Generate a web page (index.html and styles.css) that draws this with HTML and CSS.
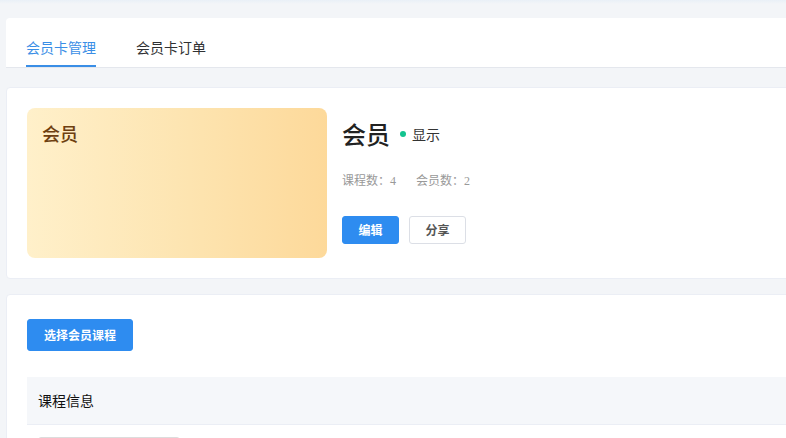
FILE: index.html
```html
<!DOCTYPE html>
<html lang="zh">
<head>
<meta charset="utf-8">
<title>会员卡管理</title>
<link rel="stylesheet" href="styles.css">
</head>
<body>
<div class="topline"></div>
<main class="page">
  <section class="tabs-panel">
    <nav class="tabs">
      <div class="tab active">会员卡管理</div>
      <div class="tab">会员卡订单</div>
    </nav>
  </section>

  <section class="panel card-panel">
    <div class="member-card">
      <div class="member-card-name">会员</div>
    </div>
    <div class="info">
      <div class="title-row">
        <h1 class="title">会员</h1>
        <span class="status"><span class="dot"></span>显示</span>
      </div>
      <div class="stats">
        <span class="stat">课程数：4</span>
        <span class="stat">会员数：2</span>
      </div>
      <div class="actions">
        <button class="btn btn-primary">编辑</button>
        <button class="btn btn-default">分享</button>
      </div>
    </div>
  </section>

  <section class="panel course-panel">
    <button class="btn btn-primary btn-large">选择会员课程</button>
    <div class="table">
      <div class="thead">课程信息</div>
      <div class="trow">
        <div class="thumb"></div>
      </div>
    </div>
  </section>
</main>
</body>
</html>
```
FILE: styles.css
```css
html, body {
  margin: 0;
  padding: 0;
}
body {
  background: #f3f5f8;
  font-family: "Liberation Serif", "Noto Sans CJK SC", serif;
  overflow: hidden;
  width: 786px;
  height: 438px;
  position: relative;
}
.topline {
  height: 4px;
  background: linear-gradient(#e9f0f7, #f3f5f8);
}
.page {
  width: 1200px;
  padding: 14px 0 0 6px;
}
.tabs-panel {
  background: #fff;
  border-top-left-radius: 4px;
  border-bottom: 1px solid #e4e7ed;
  padding: 9px 0 0 20px;
}
.tabs {
  display: flex;
  gap: 40px;
}
.tab {
  font-family: "Noto Sans CJK SC", sans-serif;
  font-size: 14px;
  line-height: 40px;
  height: 40px;
  color: #303133;
  box-sizing: border-box;
}
.tab.active {
  color: #3a8ee6;
  border-bottom: 2px solid #3a8ee6;
}
.panel {
  background: #fff;
  border: 1px solid #ebeef5;
  border-radius: 4px;
}
.card-panel {
  margin-top: 19px;
  padding: 20px;
  display: flex;
}
.member-card {
  width: 300px;
  height: 150px;
  border-radius: 8px;
  background: linear-gradient(90deg, #fff0ca 0%, #fde5b2 50%, #fdd99a 100%);
  padding: 15px;
  box-sizing: border-box;
}
.member-card-name {
  font-family: "Noto Sans CJK SC", serif;
  font-size: 18px;
  line-height: 20px;
  color: #6e3f10;
  font-weight: 500;
}
.info {
  margin-left: 15px;
}
.title-row {
  display: flex;
  align-items: center;
  height: 32px;
  margin-top: 10px;
}
.title {
  margin: 0;
  font-family: "Noto Sans CJK SC", serif;
  font-size: 24px;
  font-weight: 500;
  color: #222;
  line-height: 32px;
}
.status {
  display: flex;
  align-items: center;
  margin-left: 10px;
  font-family: "Noto Sans CJK SC", sans-serif;
  font-size: 14px;
  color: #333;
}
.dot {
  width: 6px;
  height: 6px;
  border-radius: 50%;
  background: #13c38f;
  margin-right: 6px;
}
.stats {
  display: flex;
  gap: 20px;
  margin-top: 21px;
  font-size: 12px;
  line-height: 20px;
  color: #999;
}
.actions {
  display: flex;
  gap: 10px;
  margin-top: 25px;
}
.btn {
  font-family: "Noto Sans CJK SC", sans-serif;
  font-size: 12px;
  font-weight: 700;
  height: 28px;
  padding: 0 15.5px;
  border-radius: 3px;
  border: 1px solid transparent;
  cursor: pointer;
  line-height: 26px;
}
.btn-primary {
  background: #2e8cf0;
  border-color: #2e8cf0;
  color: #fff;
}
.btn-default {
  background: #fff;
  border-color: #dcdfe6;
  color: #555;
}
.course-panel {
  margin-top: 15px;
  padding: 24px 20px 20px;
}
.btn-large {
  height: 32px;
  padding: 0 16px;
  line-height: 30px;
}
.table {
  margin-top: 26px;
}
.thead {
  background: #f5f7fa;
  border-bottom: 1px solid #ebeef5;
  height: 47px;
  line-height: 47px;
  padding-left: 11px;
  font-family: "Noto Sans CJK SC", sans-serif;
  font-size: 14px;
  font-weight: 400;
  color: #111;
}
.trow {
  padding: 12px 11px;
}
.thumb {
  width: 140px;
  height: 60px;
  border: 1px solid #dcdcdc;
  border-radius: 3px;
}
```
